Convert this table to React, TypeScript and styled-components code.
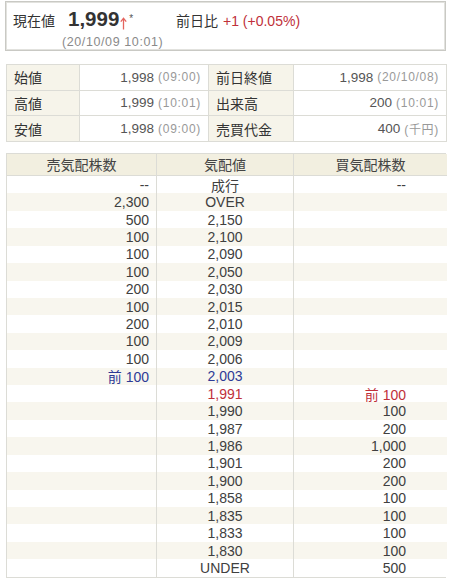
import React from 'react';
import styled, { createGlobalStyle } from 'styled-components';

const Global = createGlobalStyle`
  html, body { margin: 0; padding: 0; background: #fff; }
  body {
    font-family: "Liberation Sans", "Noto Sans CJK JP", Arial, sans-serif;
    color: #333;
  }
`;

const Page = styled.div`
  width: 450px;
  box-sizing: border-box;
  padding: 1px 4px 0 5px;
`;

const PriceBox = styled.div`
  height: 50px;
  box-sizing: border-box;
  border: 1px solid #c9c9c4;
  box-shadow: inset 0 0 0 1px #e2e2de;
  display: flex;
  align-items: baseline;
  padding: 6px 0 0 7px;
`;

const BoxLabel = styled.span`
  font-size: 14px;
  color: #333;
  width: 49px;
  flex: none;
`;

const ChangeLabel = styled.span`
  font-size: 14px;
  color: #333;
`;

const PriceCol = styled.div`
  width: 114px;
  flex: none;
  display: flex;
  flex-direction: column;
`;

const PriceLine = styled.div`
  margin-left: 6px;
  line-height: 22px;
  display: flex;
  align-items: baseline;
`;

const Price = styled.span`
  font-family: "Liberation Sans", Arial, sans-serif;
  font-size: 20.5px;
  font-weight: bold;
  color: #333;
`;

const ArrowIcon = styled.svg`
  width: 7px;
  height: 13px;
  margin-left: 1px;
  align-self: center;
  position: relative;
  top: 2px;
`;

const Star = styled.span`
  font-size: 10px;
  color: #555;
  margin-left: 2px;
  position: relative;
  top: -4px;
`;

const Time = styled.span`
  font-size: 12.5px;
  letter-spacing: 0.6px;
  color: #8a8a8a;
  line-height: 16px;
`;

const Change = styled.span`
  font-size: 14px;
  color: #c0303a;
  margin-left: 5px;
`;

const InfoGrid = styled.div`
  margin: 13px 0 0 1px;
  width: 440px;
  display: grid;
  grid-template-columns: 73px 129px 85px 153px;
  grid-auto-rows: 25.67px;
  border-top: 1px solid #dcdcd6;
  border-left: 1px solid #dcdcd6;
`;

const InfoCell = styled.div<{ $label?: boolean }>`
  box-sizing: border-box;
  border-right: 1px solid #dcdcd6;
  border-bottom: 1px solid #dcdcd6;
  background: ${(p) => (p.$label ? '#f6f4ea' : '#fff')};
  display: flex;
  align-items: center;
  justify-content: ${(p) => (p.$label ? 'flex-start' : 'flex-end')};
  padding: ${(p) => (p.$label ? '0 0 0 7px' : '0 7px 0 0')};
  font-size: ${(p) => (p.$label ? '14px' : '13.5px')};
  color: ${(p) => (p.$label ? '#333' : '#555')};
  white-space: nowrap;
`;

const Sub = styled.span`
  font-size: 12px;
  letter-spacing: 0.7px;
  color: #999;
  margin-left: 4px;
`;

const Book = styled.div`
  margin: 11px 0 0 1px;
  width: 440px;
  display: grid;
  grid-template-columns: 150px 137px 153px;
  border: 1px solid #dcdcd6;
  box-sizing: border-box;
`;

const HeadCell = styled.div<{ $last?: boolean }>`
  height: 22px;
  box-sizing: border-box;
  background: #f2efe0;
  border-bottom: 1px solid #dcdcd6;
  border-right: ${(p) => (p.$last ? 'none' : '1px solid #dcdcd6')};
  display: flex;
  align-items: center;
  justify-content: center;
  font-size: 14px;
  color: #444;
`;

type Tone = 'ask' | 'bid' | undefined;

const BookCell = styled.div<{ $col: number; $alt: boolean; $tone?: Tone }>`
  height: 17.43px;
  box-sizing: border-box;
  background: ${(p) => (p.$alt ? '#f8f6ee' : '#fff')};
  border-right: ${(p) => (p.$col === 2 ? 'none' : '1px solid #dcdcd6')};
  display: flex;
  align-items: center;
  justify-content: ${(p) => (p.$col === 1 ? 'center' : 'flex-end')};
  padding-right: ${(p) => (p.$col === 0 ? '7px' : p.$col === 2 ? '41px' : '0')};
  font-size: 14px;
  white-space: nowrap;
  color: ${(p) =>
    p.$tone === 'ask' ? '#2e3a96' : p.$tone === 'bid' ? '#c0303a' : '#404040'};
`;

const info: [string, string, string, string, string, string][] = [
  ['始値', '1,998', '(09:00)', '前日終値', '1,998', '(20/10/08)'],
  ['高値', '1,999', '(10:01)', '出来高', '200', '(10:01)'],
  ['安値', '1,998', '(09:00)', '売買代金', '400', '(千円)'],
];

type Row = { ask: string; price: string; bid: string; tone?: Tone };

const rows: Row[] = [
  { ask: '--', price: '成行', bid: '--' },
  { ask: '2,300', price: 'OVER', bid: '' },
  { ask: '500', price: '2,150', bid: '' },
  { ask: '100', price: '2,100', bid: '' },
  { ask: '100', price: '2,090', bid: '' },
  { ask: '100', price: '2,050', bid: '' },
  { ask: '200', price: '2,030', bid: '' },
  { ask: '100', price: '2,015', bid: '' },
  { ask: '200', price: '2,010', bid: '' },
  { ask: '100', price: '2,009', bid: '' },
  { ask: '100', price: '2,006', bid: '' },
  { ask: '前 100', price: '2,003', bid: '', tone: 'ask' },
  { ask: '', price: '1,991', bid: '前 100', tone: 'bid' },
  { ask: '', price: '1,990', bid: '100' },
  { ask: '', price: '1,987', bid: '200' },
  { ask: '', price: '1,986', bid: '1,000' },
  { ask: '', price: '1,901', bid: '200' },
  { ask: '', price: '1,900', bid: '200' },
  { ask: '', price: '1,858', bid: '100' },
  { ask: '', price: '1,835', bid: '100' },
  { ask: '', price: '1,833', bid: '100' },
  { ask: '', price: '1,830', bid: '100' },
  { ask: '', price: 'UNDER', bid: '500' },
];

export default function App() {
  return (
    <Page>
      <Global />
      <PriceBox>
        <BoxLabel>現在値</BoxLabel>
        <PriceCol>
          <PriceLine>
            <Price>1,999</Price>
            <ArrowIcon viewBox="0 0 7 13" aria-hidden="true">
              <path
                d="M3.5 12.5 V1.5 M0.8 4.6 L3.5 1.2 L6.2 4.6"
                fill="none"
                stroke="#e4645e"
                strokeWidth="1.3"
              />
            </ArrowIcon>
            <Star>*</Star>
          </PriceLine>
          <Time>(20/10/09 10:01)</Time>
        </PriceCol>
        <ChangeLabel>前日比</ChangeLabel>
        <Change>+1 (+0.05%)</Change>
      </PriceBox>

      <InfoGrid>
        {info.map((r) => (
          <React.Fragment key={r[0]}>
            <InfoCell $label>{r[0]}</InfoCell>
            <InfoCell>
              {r[1]}
              <Sub>{r[2]}</Sub>
            </InfoCell>
            <InfoCell $label>{r[3]}</InfoCell>
            <InfoCell>
              {r[4]}
              <Sub>{r[5]}</Sub>
            </InfoCell>
          </React.Fragment>
        ))}
      </InfoGrid>

      <Book>
        <HeadCell>売気配株数</HeadCell>
        <HeadCell>気配値</HeadCell>
        <HeadCell $last>買気配株数</HeadCell>
        {rows.map((r, i) => {
          const alt = i % 2 === 1;
          return (
            <React.Fragment key={i}>
              <BookCell $col={0} $alt={alt} $tone={r.tone === 'ask' ? 'ask' : undefined}>
                {r.ask}
              </BookCell>
              <BookCell $col={1} $alt={alt} $tone={r.tone}>
                {r.price}
              </BookCell>
              <BookCell $col={2} $alt={alt} $tone={r.tone === 'bid' ? 'bid' : undefined}>
                {r.bid}
              </BookCell>
            </React.Fragment>
          );
        })}
      </Book>
    </Page>
  );
}
